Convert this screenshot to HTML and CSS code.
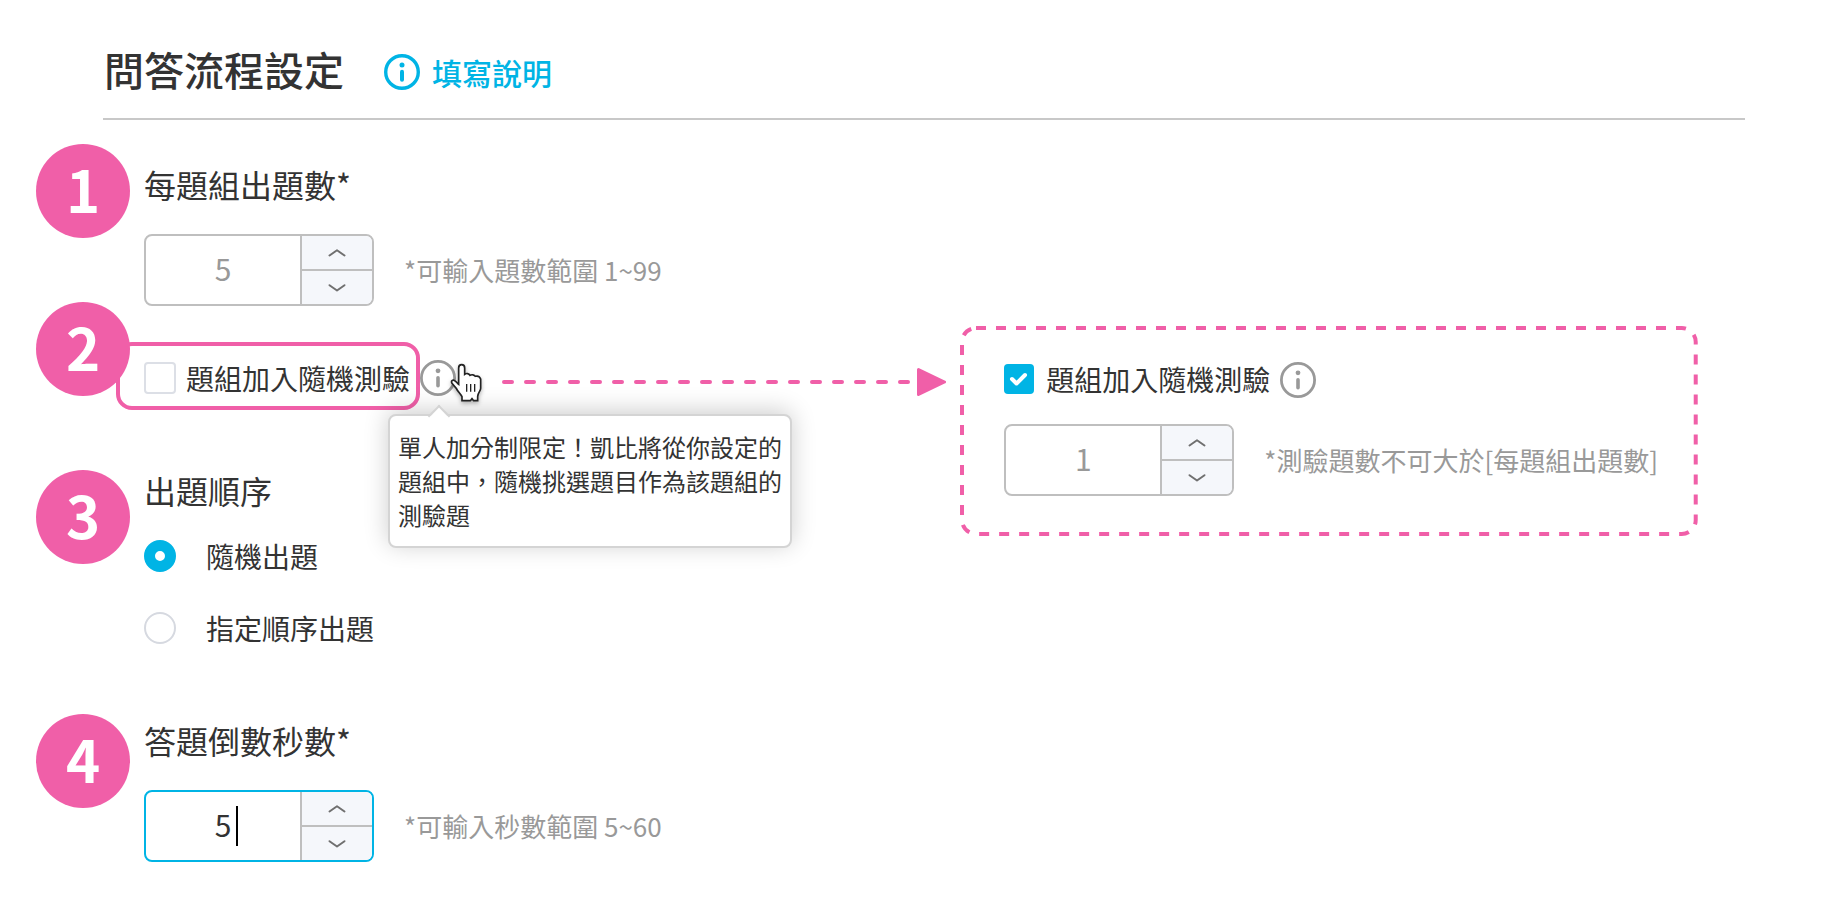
FILE: index.html
```html
<!DOCTYPE html>
<html lang="zh-Hant">
<head>
<meta charset="utf-8">
<meta name="viewport" content="width=device-width, initial-scale=1">
<title>問答流程設定</title>
<link rel="stylesheet" href="styles.css">
</head>
<body>
<svg class="sprite" aria-hidden="true">
  <symbol id="info" viewBox="0 0 36 36">
    <circle cx="18" cy="18" r="16.6" fill="none" stroke="currentColor" stroke-width="2.8"/>
    <circle cx="18" cy="10.8" r="2.4" fill="currentColor"/>
    <path d="M18 17.8v8" stroke="currentColor" stroke-width="3.6" stroke-linecap="round"/>
  </symbol>
  <symbol id="info-bold" viewBox="0 0 36 36">
    <circle cx="18" cy="18" r="16.3" fill="none" stroke="currentColor" stroke-width="3.4"/>
    <circle cx="18" cy="11" r="2.5" fill="currentColor"/>
    <path d="M18 17.8v8" stroke="currentColor" stroke-width="4" stroke-linecap="round"/>
  </symbol>
  <symbol id="up" viewBox="0 0 18 10">
    <path d="M1.5 7.5L9 2.2l7.5 5.3" fill="none" stroke="#707070" stroke-width="2" stroke-linecap="round" stroke-linejoin="round"/>
  </symbol>
  <symbol id="down" viewBox="0 0 18 10">
    <path d="M1.5 2.2L9 7.5l7.5-5.3" fill="none" stroke="#707070" stroke-width="2" stroke-linecap="round" stroke-linejoin="round"/>
  </symbol>
</svg>

<header class="page-header">
  <h1>問答流程設定</h1>
  <a class="help" href="#help"><svg class="info-icon"><use href="#info-bold"/></svg>填寫說明</a>
</header>

<main class="steps">
  <section class="step step-count">
    <span class="badge">1</span>
    <div class="body">
      <label class="heading" for="count">每題組出題數*</label>
      <div class="row">
        <div class="spinner">
          <input id="count" type="text" inputmode="numeric" value="5">
          <div class="arrows">
            <button type="button" aria-label="增加"><svg><use href="#up"/></svg></button>
            <button type="button" aria-label="減少"><svg><use href="#down"/></svg></button>
          </div>
        </div>
        <span class="hint">*可輸入題數範圍 1~99</span>
      </div>
    </div>
  </section>

  <section class="step step-random">
    <span class="badge">2</span>
    <div class="body random-row">
      <label class="check highlight"><input type="checkbox">題組加入隨機測驗</label>
      <div class="info-wrap">
        <svg class="info-icon grey"><use href="#info"/></svg>
        <div class="tooltip" role="tooltip">單人加分制限定！凱比將從你設定的題組中，隨機挑選題目作為該題組的測驗題</div>
        <svg class="cursor" viewBox="120 40 102 120" aria-hidden="true">
          <path d="M146 94V55Q146 45 155 45Q164 45 164 55V74C169 70 177 71 180 77C185 74 193 75 196 80C202 78 209 81 212 88V116C212 124 204 128 203 140V153H191L186 147L181 153H156V141C151 132 142 124 139 116L126 101C122 94 128 89 134 93C140 96 142 101 146 104Z" fill="#fff" stroke="#222" stroke-width="5"/>
          <path d="M170 103v23M182 103v23M194 103v23" stroke="#222" stroke-width="4"/>
        </svg>
      </div>
    </div>
  </section>

  <div class="callout">
    <div class="connector" aria-hidden="true">
      <svg class="dash-line"><line x1="3" y1="14" x2="100%" y2="14"/></svg>
      <svg class="arrow-head" viewBox="0 0 29 28"><path d="M1.5 1.5L27.5 14L1.5 26.5Z"/></svg>
    </div>
    <div class="panel">
      <svg class="panel-border" aria-hidden="true"><rect x="2" y="2" rx="14"/></svg>
      <div class="panel-title">
        <label class="check"><input type="checkbox" checked>題組加入隨機測驗</label>
        <svg class="info-icon grey"><use href="#info"/></svg>
      </div>
      <div class="row">
        <div class="spinner">
          <input type="text" inputmode="numeric" value="1" aria-label="測驗題數">
          <div class="arrows">
            <button type="button" aria-label="增加"><svg><use href="#up"/></svg></button>
            <button type="button" aria-label="減少"><svg><use href="#down"/></svg></button>
          </div>
        </div>
        <span class="hint">*測驗題數不可大於[每題組出題數]</span>
      </div>
    </div>
  </div>

  <section class="step step-order">
    <span class="badge">3</span>
    <div class="body" role="radiogroup" aria-labelledby="order">
      <h2 class="heading" id="order">出題順序</h2>
      <div class="radios">
        <label class="radio"><input type="radio" name="order" checked>隨機出題</label>
        <label class="radio"><input type="radio" name="order">指定順序出題</label>
      </div>
    </div>
  </section>

  <section class="step step-timer">
    <span class="badge">4</span>
    <div class="body">
      <label class="heading" for="seconds">答題倒數秒數*</label>
      <div class="row">
        <div class="spinner active">
          <input id="seconds" type="text" inputmode="numeric" value="5">
          <span class="caret"></span>
          <div class="arrows">
            <button type="button" aria-label="增加"><svg><use href="#up"/></svg></button>
            <button type="button" aria-label="減少"><svg><use href="#down"/></svg></button>
          </div>
        </div>
        <span class="hint">*可輸入秒數範圍 5~60</span>
      </div>
    </div>
  </section>
</main>
</body>
</html>
```
FILE: styles.css
```css
* {
  box-sizing: border-box;
}

:root {
  --pink: #f05fa8;
  --blue: #00b4e5;
  --text: #333;
  --muted: #999;
  --line: #bfbfbf;
}

body {
  margin: 0;
  background: #fff;
  color: var(--text);
  font-family: "Noto Sans CJK TC", sans-serif;
  font-size: 28px;
}

input,
button {
  margin: 0;
  font: inherit;
}

.sprite {
  position: absolute;
  width: 0;
  height: 0;
}

.page-header {
  display: flex;
  align-items: center;
  gap: 40px;
  margin: 0 103px 24px;
  padding: 36px 0 10px 1px;
  border-bottom: 2px solid #c8c8c8;
}

h1 {
  margin: 0;
  padding-bottom: 6px;
  font-size: 40px;
  font-weight: 500;
  line-height: 66px;
}

h1,
h2,
.help,
label,
.hint {
  white-space: nowrap;
}

.help {
  display: flex;
  align-items: center;
  gap: 12px;
  color: var(--blue);
  font-size: 30px;
  font-weight: 500;
  line-height: 48px;
  text-decoration: none;
}

.info-icon {
  display: block;
  flex: none;
  width: 36px;
  height: 36px;
}

.grey {
  color: var(--muted);
}

.steps {
  display: grid;
  grid-template-columns: auto minmax(0, 1fr);
  column-gap: 45px;
  align-items: start;
  padding: 0 150px 50px 36px;
}

.step {
  display: flex;
  align-items: flex-start;
  gap: 14px;
  grid-column: 1;
}

.step-count,
.step-timer {
  grid-column: 1 / -1;
}

.badge {
  position: relative;
  z-index: 1;
  flex: none;
  width: 94px;
  height: 94px;
  border-radius: 50%;
  background: var(--pink);
  color: #fff;
  font-size: 58px;
  font-weight: 700;
  line-height: 88px;
  text-align: center;
}

.heading {
  display: block;
  margin: 0 0 30px;
  font-size: 32px;
  font-weight: 400;
  line-height: 40px;
}

.row {
  display: flex;
  align-items: center;
  gap: 30px;
}

.step-count .body {
  padding-top: 20px;
}

.step-timer .body {
  padding-top: 6px;
}

.hint {
  color: var(--muted);
  font-size: 26px;
  line-height: 40px;
}

/* number field */
.spinner {
  position: relative;
  display: flex;
  flex: none;
  width: 230px;
  height: 72px;
  overflow: hidden;
  border: 2px solid var(--line);
  border-radius: 8px;
  background: #fff;
}

.spinner input {
  flex: 1;
  min-width: 0;
  padding: 0 0 4px;
  border: 0;
  outline: 0;
  background: none;
  color: var(--muted);
  font-size: 30px;
  text-align: center;
}

.spinner.active {
  border-color: var(--blue);
}

.spinner.active input {
  color: var(--text);
}

.caret {
  position: absolute;
  top: 14px;
  left: 90px;
  width: 2px;
  height: 40px;
  background: #000;
}

.arrows {
  display: flex;
  flex-direction: column;
  width: 72px;
  border-left: 2px solid var(--line);
}

.arrows button {
  display: flex;
  flex: 1;
  align-items: center;
  justify-content: center;
  padding: 0;
  border: 0;
  background: #f5f7fb;
}

.arrows button + button {
  border-top: 2px solid var(--line);
}

.arrows svg {
  width: 18px;
  height: 10px;
}

/* tick boxes and radios */
.check {
  display: flex;
  align-items: center;
  gap: 10px;
  line-height: 40px;
}

.check input,
.radio input {
  flex: none;
  width: 32px;
  height: 32px;
  border: 2px solid #dcdfe6;
  border-radius: 4px;
  background: #fff;
  appearance: none;
}

.check input:checked {
  width: 30px;
  height: 30px;
  margin-right: 2px;
  border: 0;
  background: var(--blue) url("data:image/svg+xml,%3Csvg xmlns='http://www.w3.org/2000/svg' viewBox='0 0 30 30'%3E%3Cpath d='M8 15l4.500 4.500L21 11' fill='none' stroke='%23fff' stroke-width='4' stroke-linecap='round' stroke-linejoin='round'/%3E%3C/svg%3E") center / 30px;
}

.radios {
  display: flex;
  flex-direction: column;
  gap: 40px;
}

.radio {
  display: flex;
  align-items: center;
  gap: 30px;
  height: 32px;
}

.radio input {
  border-color: #d6d9e0;
  border-radius: 50%;
}

.radio input:checked {
  border: 11px solid var(--blue);
}

/* random quiz option */
.step-random {
  margin-top: -4px;
  padding-bottom: 60px;
}

.random-row {
  display: flex;
  align-items: center;
  margin-left: -28px;
  padding-top: 40px;
}

.highlight {
  width: 304px;
  height: 68px;
  padding: 4px 0 0 24px;
  border: 4px solid var(--pink);
  border-radius: 16px;
}

.info-wrap {
  position: relative;
  margin-top: 4px;
}

.tooltip {
  position: absolute;
  z-index: 2;
  top: 54px;
  left: -32px;
  width: 404px;
  padding: 14px 8px;
  border: 2px solid #d4d4d4;
  border-radius: 8px;
  background: #fff;
  box-shadow: 0 -3px 24px rgba(0, 0, 0, 0.2);
  font-size: 24px;
  line-height: 34px;
}

.tooltip::before {
  content: "";
  position: absolute;
  top: -8px;
  left: 41px;
  width: 14px;
  height: 14px;
  border: solid #d4d4d4;
  border-width: 2px 0 0 2px;
  background: linear-gradient(135deg, #fff 50%, transparent 50%);
  transform: rotate(45deg);
}

.cursor {
  position: absolute;
  z-index: 3;
  top: 3px;
  left: 30px;
  width: 34px;
  height: 40px;
  filter: drop-shadow(0 2px 2px rgba(0, 0, 0, 0.3));
}

/* expanded state shown beside step 2 */
.callout {
  display: flex;
  grid-row: 2 / span 2;
  grid-column: 2;
  gap: 14px;
  align-items: flex-start;
  margin-top: 20px;
}

.connector {
  display: flex;
  flex: 1;
  gap: 6px;
  min-width: 0;
  padding-top: 42px;
}

.dash-line {
  flex: 1;
  min-width: 0;
  height: 28px;
}

.dash-line line {
  stroke: var(--pink);
  stroke-width: 4;
  stroke-linecap: round;
  stroke-dasharray: 8 14;
}

.arrow-head {
  flex: none;
  width: 29px;
  height: 28px;
  fill: var(--pink);
  stroke: var(--pink);
  stroke-width: 3;
  stroke-linejoin: round;
}

.panel {
  position: relative;
  flex: none;
  padding: 36px 40px 40px 44px;
}

.panel-border {
  position: absolute;
  inset: 0;
  width: 100%;
  height: 100%;
}

.panel-border rect {
  width: calc(100% - 4px);
  height: calc(100% - 4px);
  fill: none;
  stroke: var(--pink);
  stroke-width: 4;
  stroke-dasharray: 10 10;
}

.panel-title {
  position: relative;
  display: flex;
  align-items: center;
  gap: 10px;
  height: 36px;
  margin-bottom: 26px;
}

.panel .check {
  padding-bottom: 2px;
}

.panel .row {
  position: relative;
}

.step-order {
  padding-bottom: 70px;
}
```
